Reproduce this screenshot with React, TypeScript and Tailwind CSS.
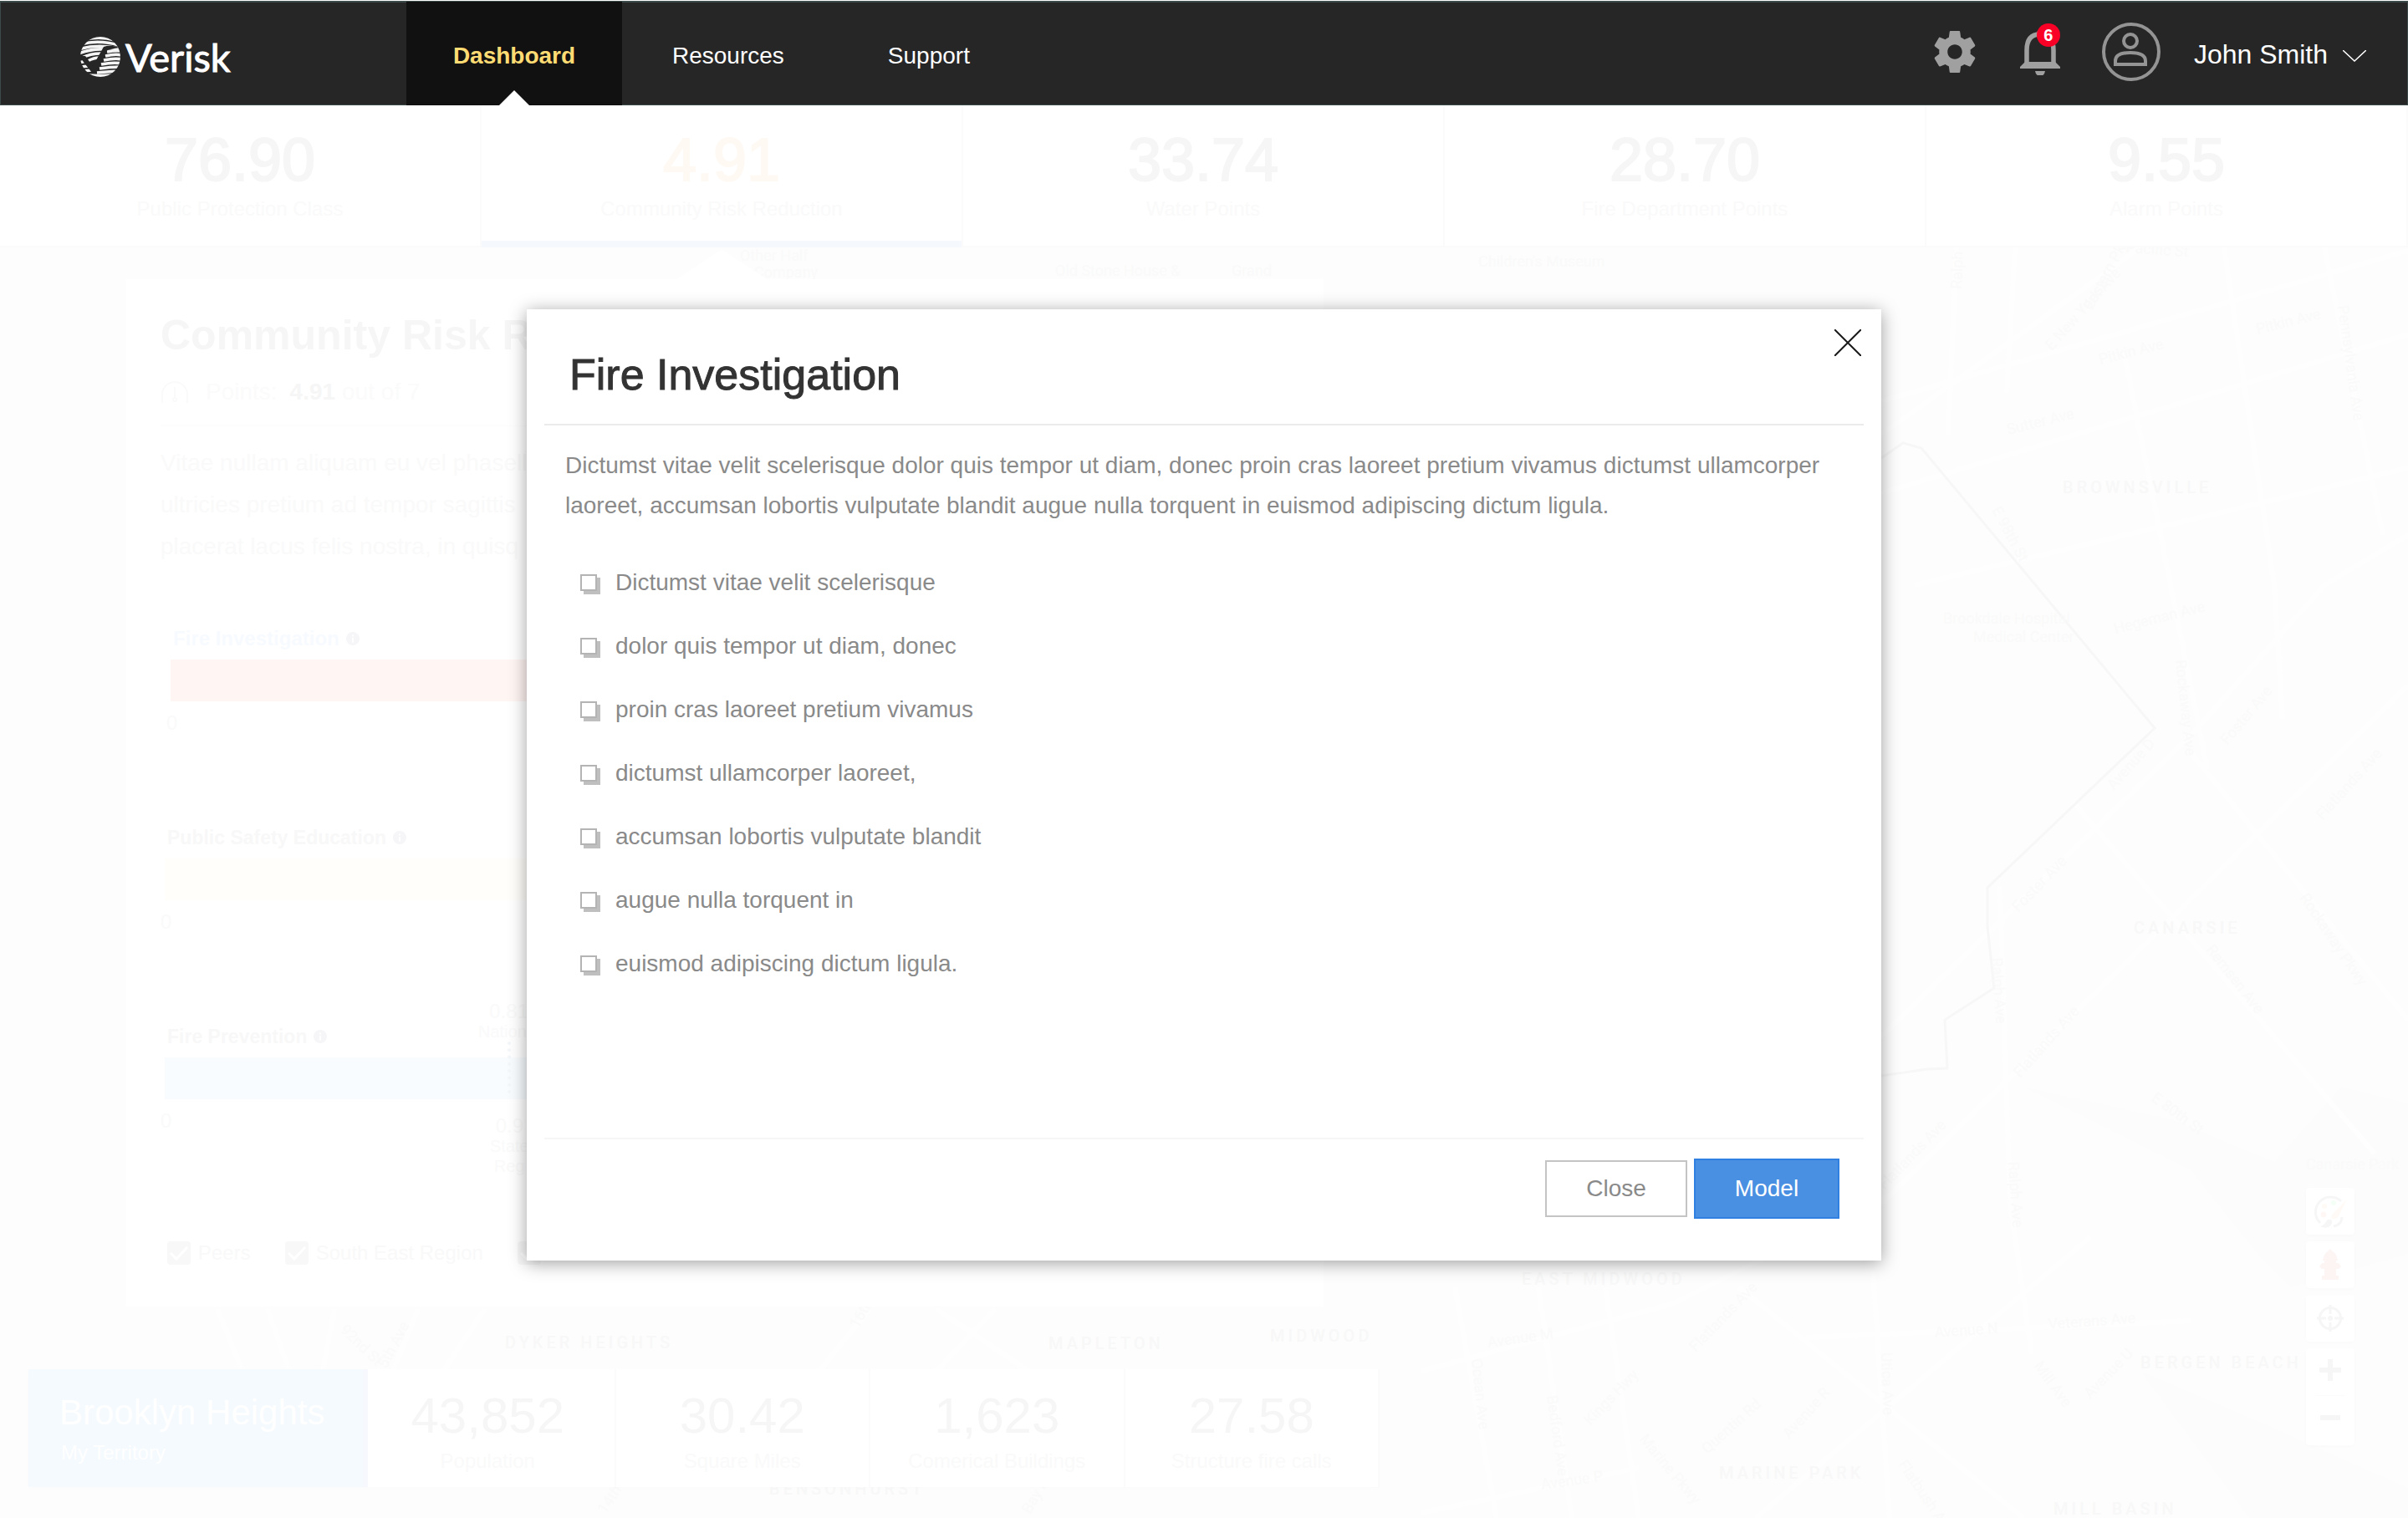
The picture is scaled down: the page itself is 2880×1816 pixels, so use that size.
import { useState, type ReactNode } from "react";

const sans = "font-['Liberation_Sans',Arial,sans-serif]";

type Stat = { value: string; label: string; active?: boolean };

const stats: Stat[] = [
  { value: "76.90", label: "Public Protection Class" },
  { value: "4.91", label: "Community Risk Reduction", active: true },
  { value: "33.74", label: "Water Points" },
  { value: "28.70", label: "Fire Department Points" },
  { value: "9.55", label: "Alarm Points" },
];

const territoryStats: Stat[] = [
  { value: "43,852", label: "Population" },
  { value: "30.42", label: "Square Miles" },
  { value: "1,623", label: "Comerical Buildings" },
  { value: "27.58", label: "Structure fire calls" },
];

const items = [
  "Dictumst vitae velit scelerisque",
  "dolor quis tempor ut diam, donec",
  "proin cras laoreet pretium vivamus",
  "dictumst ullamcorper laoreet,",
  "accumsan lobortis vulputate blandit",
  "augue nulla torquent in",
  "euismod adipiscing dictum ligula.",
];

const areas: [string, number, number][] = [
  ["BROWNSVILLE", 2467, 590],
  ["CANARSIE", 2552, 1117],
  ["BERGEN BEACH", 2560, 1637],
  ["MARINE PARK", 2056, 1769],
  ["MILL BASIN", 2456, 1812],
  ["EAST MIDWOOD", 1820, 1537],
  ["MIDWOOD", 1519, 1605],
  ["MAPLETON", 1254, 1614],
  ["DYKER HEIGHTS", 604, 1613],
  ["BENSONHURST", 920, 1788],
];

const streets: [string, number, number, number][] = [
  ["Pitkin Ave", 2700, 400, -14],
  ["Pitkin Ave", 2512, 436, -14],
  ["Sutter Ave", 2402, 520, -14],
  ["Eastern Pkwy", 2502, 372, -62],
  ["E New York Ave", 2454, 420, -48],
  ["Pennsylvania Ave", 2796, 366, 82],
  ["Pacific St", 2542, 302, 4],
  ["Ralph Ave", 2346, 346, -88],
  ["E 98th St", 2382, 610, 62],
  ["Hegeman Ave", 2530, 758, -14],
  ["Brookdale Hospital", 2324, 746, 0],
  ["Medical Center", 2360, 768, 0],
  ["Children's Museum", 1768, 319, 0],
  ["Other Half", 885, 312, 0],
  ["Company", 902, 332, 0],
  ["Old Stone House &", 1262, 330, 0],
  ["Grand", 1473, 330, 0],
  ["Rockaway Ave", 2602, 790, 84],
  ["Foster Ave", 2664, 892, -50],
  ["Avenue D", 2528, 946, -48],
  ["Flatlands Ave", 2778, 982, -48],
  ["Rockaway Pkwy", 2750, 1074, 56],
  ["Remsen Ave", 2638, 1136, 52],
  ["Foster Ave", 2414, 1092, -46],
  ["Ralph Ave", 2382, 1146, 86],
  ["Flatlands Ave", 2416, 1290, -48],
  ["E 80th St", 2572, 1316, 36],
  ["Canarsie Park", 2758, 1399, 0],
  ["Ralph Ave", 2402, 1390, 86],
  ["Flatlands Ave", 2254, 1424, -46],
  ["Flatlands Ave", 2028, 1618, -46],
  ["Avenue M", 1780, 1612, -8],
  ["Avenue N", 2314, 1600, -4],
  ["Veterans Ave", 2450, 1590, -4],
  ["Mill Ave", 2432, 1634, 54],
  ["Avenue U", 2500, 1674, -46],
  ["Utica Ave", 2250, 1618, 88],
  ["Ocean Ave", 1760, 1626, 84],
  ["Bedford Ave", 1850, 1670, 82],
  ["Kings Hwy", 1902, 1706, -46],
  ["Marine Pkwy", 1960, 1722, 50],
  ["Quentin Rd", 2042, 1740, -42],
  ["Avenue R", 2140, 1722, -48],
  ["Avenue P", 1844, 1782, -8],
  ["Flatbush Ave", 2270, 1752, 56],
  ["92nd St", 406, 1592, 44],
  ["5th Ave", 462, 1638, -62],
  ["14th Ave", 724, 1812, -56],
  ["16th Ave", 1026, 1590, -60],
  ["Bay Pkwy", 1232, 1812, -60],
];

const roads = [
  "M2250 480 L2880 300",
  "M2250 590 L2880 400",
  "M2250 520 L2560 296",
  "M2290 700 L2880 560",
  "M2340 296 L2330 520 M2410 296 L2400 470",
  "M2540 420 L2640 920 M2660 296 L2720 700 L2730 860",
  "M2780 296 L2850 640",
  "M2250 1240 L2620 880 L2780 700 L2880 640",
  "M2250 1440 L2880 820",
  "M2480 960 L2840 1380",
  "M2620 900 L2880 1220",
  "M2392 1060 L2404 1440 L2430 1620",
  "M2160 1600 L2620 1580",
  "M1700 1640 L2000 1560 L2260 1430",
  "M1740 1540 L1790 1816 M1840 1540 L1880 1816 M1920 1540 L1960 1816",
  "M2080 1540 L2420 1816",
  "M2240 1520 L2260 1816",
  "M1700 1810 L1960 1756",
  "M2100 1816 L2500 1480",
  "M260 1566 L290 1640 M320 1566 L346 1640 M400 1566 L386 1640 M500 1566 L470 1640 M580 1566 L530 1640",
  "M1040 1566 L980 1640 M1120 1566 L1230 1640 M1190 1566 L1120 1640",
];

function RiskMap() {
  return (
    <svg
      aria-hidden="true"
      className="absolute inset-0 h-full w-full"
      viewBox="0 0 2880 1816"
      preserveAspectRatio="xMinYMin slice"
    >
      <rect width="2880" height="1816" fill="#fdfdfd" />
      <path d="M2420 1300 L2620 1400 L2700 1500 L2740 1540 L2880 1500 L2880 1320 L2800 1300 L2720 1390 L2600 1340 Z" fill="#fcfcfc" />
      <path d="M2560 1640 L2690 1816 L2880 1816 L2880 1780 L2700 1700 Z" fill="#fcfcfc" />
      <g stroke="#fefefe" strokeWidth="6" fill="none">
        {roads.map((d) => (
          <path key={d} d={d} />
        ))}
      </g>
      <path
        d="M2250 548 L2276 530 L2298 536 L2577 871 L2377 1062 L2377 1108 L2385 1182 L2326 1220 L2329 1278 L2305 1279 L2250 1287"
        fill="none"
        stroke="#f7f7f7"
        strokeWidth="3"
      />
      <g fill="#f8f8f8" className="font-['Roboto',sans-serif] text-[20px] font-medium tracking-[4px]">
        {areas.map(([name, x, y]) => (
          <text key={name} x={x} y={y}>
            {name}
          </text>
        ))}
      </g>
      <g fill="#fafafa" className="font-['Roboto',sans-serif] text-[18px]">
        {streets.map(([name, x, y, turn]) => (
          <text key={`${name}-${x}-${y}`} transform={`translate(${x} ${y}) rotate(${turn})`}>
            {name}
          </text>
        ))}
      </g>
    </svg>
  );
}

function VeriskLogo() {
  return (
    <a href="#home" aria-label="Verisk home" className="flex items-center gap-[6px] text-white">
      <svg viewBox="0 0 48 48" className="h-12 w-12" aria-hidden="true">
        <defs>
          <clipPath id="globe">
            <circle cx="24" cy="24" r="24" />
          </clipPath>
        </defs>
        <g clipPath="url(#globe)">
          <g stroke="#f4f4f4" strokeWidth="3.6" fill="none">
            <path d="M6 3 Q24 -1 42 4" />
            <path d="M0 9 Q22 3 46 10" />
            <path d="M-2 15 Q20 8 46 14" />
            <path d="M-2 20 Q14 14 28 15" />
            <path d="M2 25 Q12 20 25 20" />
            <path d="M32 18 Q42 16 50 17" />
            <path d="M30 23 Q42 20 50 22" />
            <path d="M9 29 Q16 25 23 25" />
            <path d="M28 28 Q42 25 50 27" />
            <path d="M25 33 Q40 30 50 32" />
            <path d="M-2 31 L7 29" />
            <path d="M23 38 Q36 36 48 36" />
            <path d="M0 36 L10 35" />
            <path d="M3 41 L13 40" />
            <path d="M20 43 Q30 42 46 41" />
            <path d="M8 46 Q24 47 40 46" />
          </g>
          <path d="M0 23 L6 23 L15 35 L28 12 Q36 9 47 13 L33 15 L18 43 L14 43 L3 29 Z" fill="#262626" />
        </g>
      </svg>
      <span className="font-['Lato',sans-serif] text-[47px] leading-[52px] [-webkit-text-stroke:1px_#ffffff]">Verisk</span>
    </a>
  );
}

function NavLink({ children }: { children: ReactNode }) {
  return (
    <a href="#nav" className="flex items-center text-[28px] text-white">
      {children}
    </a>
  );
}

function Header() {
  return (
    <header className="mt-px flex h-[125px] items-stretch border border-t-2 border-[#3c4a4a] bg-[#262626]">
      <div className="flex w-[485px] items-center pt-[8px] pl-[95px]">
        <VeriskLogo />
      </div>
      <nav className="-mt-px -mb-px flex">
        <a
          href="#dashboard"
          aria-current="page"
          className="relative flex w-[258px] items-center justify-center bg-[#111111] pt-[6px] text-[28px] font-bold text-[#ffdc73]"
        >
          Dashboard
          <svg viewBox="0 0 36 18" className="absolute bottom-0 left-1/2 h-[18px] w-9 -translate-x-1/2" aria-hidden="true">
            <path d="M0 18 L18 0 L36 18 Z" fill="#ffffff" />
          </svg>
        </a>
        <div className="flex gap-[124px] pt-[6px] pl-[60px]">
          <NavLink>Resources</NavLink>
          <NavLink>Support</NavLink>
        </div>
      </nav>
      <div className="ml-auto flex items-center pr-[49px] pb-[4px]">
        <button type="button" aria-label="Settings" className="mr-[53px]">
          <svg viewBox="2 2 20 20" className="h-[50px] w-[50px]" fill="#a0a0a0" aria-hidden="true">
            <path d="M19.430 12.980c.04-.32.07-.64.07-.98s-.03-.66-.07-.98l2.110-1.650c.19-.15.24-.42.12-.64l-2-3.460c-.12-.22-.39-.3-.61-.22l-2.490 1c-.52-.4-1.080-.73-1.690-.98l-.38-2.650C14.460 2.180 14.250 2 14 2h-4c-.25 0-.46.18-.49.42l-.38 2.650c-.61.25-1.170.59-1.690.98l-2.490-1c-.23-.09-.49 0-.61.22l-2 3.460c-.13.22-.07.49.12.64l2.110 1.650c-.04.32-.07.65-.07.98s.03.66.07.98l-2.110 1.650c-.19.15-.24.42-.12.64l2 3.460c.12.22.39.3.61.22l2.490-1c.52.4 1.080.73 1.690.98l.38 2.650c.03.24.24.42.49.42h4c.25 0 .46-.18.49-.42l.38-2.650c.61-.25 1.170-.59 1.690-.98l2.490 1c.23.09.49 0 .61-.22l2-3.460c.12-.22.07-.49-.12-.64l-2.110-1.650zM12 15.500c-1.930 0-3.500-1.570-3.500-3.500s1.570-3.500 3.500-3.500 3.500 1.570 3.500 3.500-1.570 3.500-3.500 3.500z" />
          </svg>
        </button>
        <button type="button" aria-label="Notifications, 6 unread" className="relative mr-[50px]">
          <svg viewBox="0 0 48 56" className="h-14 w-12" aria-hidden="true">
            <path d="M8 43 V26 Q8 7 24 7 Q40 7 40 26 V43" fill="none" stroke="#a0a0a0" strokeWidth="5.500" />
            <path d="M20 6 Q20 2 24 2 Q28 2 28 6 Z" fill="#a0a0a0" />
            <path d="M6 40 H42 L48 46 V48 H0 V46 Z" fill="#a0a0a0" />
            <path d="M18 51 H30 Q29 57 24 57 Q19 57 18 51 Z" fill="#a0a0a0" />
          </svg>
          <span className="absolute top-[-6px] left-5 flex h-7 w-7 items-center justify-center rounded-full bg-[#f90027] text-[20px] leading-5 font-bold text-white">
            6
          </span>
        </button>
        <button type="button" className="flex items-center text-[32px] text-white">
          <svg viewBox="0 0 70 70" className="mr-[40px] h-[70px] w-[70px]" fill="none" stroke="#949494" strokeWidth="4" aria-hidden="true">
            <circle cx="35" cy="35" r="33" />
            <circle cx="34" cy="22" r="8" />
            <path d="M16 50 V46 Q16 36 34 36 Q52 36 52 46 V50 Z" />
          </svg>
          <span className="pt-[6px]">John Smith</span>
          <svg viewBox="0 0 28 14" className="mt-[10px] ml-[18px] h-[14px] w-7" fill="none" stroke="#ffffff" strokeWidth="1.500" aria-hidden="true">
            <path d="M0 0 L14 13 L28 0" />
          </svg>
        </button>
      </div>
    </header>
  );
}

function StatBar() {
  return (
    <section className="relative grid grid-cols-5 border-b-2 border-[#fbfbfb] bg-white">
      {stats.map((s) => (
        <div
          key={s.label}
          className="relative flex h-[168px] flex-col items-center border-r-2 border-[#fbfbfb] pt-[25px]"
        >
          <div
            className={
              s.active
                ? "text-[72px] leading-[80px] text-[#fff9f4] [-webkit-text-stroke:2px_#fff9f4]"
                : "text-[72px] leading-[80px] text-[#f6f6f6] [-webkit-text-stroke:2px_#f6f6f6]"
            }
          >
            {s.value}
          </div>
          <div className="mt-[3px] text-[24px] leading-8 text-[#fafafa]">{s.label}</div>
          {s.active && <div className="absolute inset-x-0 -bottom-[2px] h-2 bg-[#f5f9fe]" />}
        </div>
      ))}
    </section>
  );
}

function InfoIcon() {
  return (
    <svg viewBox="0 0 16 16" className="h-4 w-4" aria-hidden="true">
      <circle cx="8" cy="8" r="8" fill="#f6f6f8" />
      <path d="M7 3.500 H9 V5.500 H7 Z M7 7 H9 V12.500 H7 Z" fill="#ffffff" />
    </svg>
  );
}

function CategoryBar({ name, tone, title, inset }: { name: string; tone: string; title: string; inset?: boolean }) {
  return (
    <div className={inset ? "h-[238px] pl-[7px]" : "h-[238px]"}>
      <div className={`flex items-center gap-2 pl-2 leading-6 font-bold ${title}`}>
        {name}
        <InfoIcon />
      </div>
      <div className={`mt-[13px] ml-[5px] h-[50px] ${tone}`} />
      <div className="mt-3 text-[24px] leading-7 text-[#fafafa]">0</div>
    </div>
  );
}

function PeerToggle({ label }: { label: string }) {
  return (
    <label className="flex items-center gap-[9px] text-[24px] leading-7 text-[#f9f9f9]">
      <span className="relative flex h-7 w-7">
        <input type="checkbox" defaultChecked className="h-7 w-7 appearance-none rounded-sm bg-[#f8f8f8]" />
        <svg viewBox="0 0 28 28" className="pointer-events-none absolute inset-0" fill="none" stroke="#ffffff" strokeWidth="3" aria-hidden="true">
          <path d="M4 14 L11 21 L24 7" />
        </svg>
      </span>
      {label}
    </label>
  );
}

function RiskCard() {
  return (
    <section className="relative w-[1432px] bg-white pt-[37px] pr-[42px] pb-[50px] pl-[41px]">
      <svg viewBox="0 0 108 36" className="absolute -top-9 left-[658px] h-9 w-[108px]" aria-hidden="true">
        <path d="M0 36 L54 0 L108 36 Z" fill="#ffffff" />
      </svg>
      <h2 className="text-[50px] leading-[60px] font-bold text-[#f6f6f6]">Community Risk R</h2>
      <div className="mt-[22px] flex items-center text-[28px] leading-8 text-[#fbfbfb]">
        <svg viewBox="0 0 34 28" className="mr-[20px] h-7 w-[34px]" fill="none" stroke="#fafafa" strokeWidth="2" aria-hidden="true">
          <path d="M2 27 V17 A15 15 0 0 1 32 17 V27 M17 8 V22" />
          <circle cx="17" cy="23" r="2" />
        </svg>
        Points: <strong className="mr-[8px] ml-[15px] text-[#f6f6f6]">4.91</strong> out of 7
      </div>
      <p className="mt-[24px] border-t border-[#fcfcfc] pt-[19px] text-[28px] leading-[50px] text-[#fafafa]">
        Vitae nullam aliquam eu vel phasell
        <br />
        ultricies pretium ad tempor sagittis
        <br />
        placerat lacus felis nostra, in quisq
      </p>
      <div className="relative mt-[73px]">
        <CategoryBar name="Fire Investigation" title="text-[24px] text-[#f7fbff]" tone="bg-[#fff5f3]" inset />
        <CategoryBar name="Public Safety Education" title="text-[23px] text-[#f8f8f8]" tone="bg-[#fffefa]" />
        <CategoryBar name="Fire Prevention" title="text-[23px] text-[#f8f8f8]" tone="bg-[#f8fcff]" />
        <div className="absolute top-[446px] left-[380px] flex flex-col items-center text-[20px] leading-6 text-[#fafafa]">
          <span className="text-[24px]">0.81</span>
          National
          <span className="h-[62px] border-l-4 border-dotted border-[#f4f7fa]" />
        </div>
        <div className="absolute top-[583px] left-[394px] flex flex-col items-center text-[20px] leading-6 text-[#fafafa]">
          <span className="text-[24px]">0.9</span>
          State
          <span>Reg</span>
        </div>
      </div>
      <div className="mt-[19px] flex gap-[41px] pl-2">
        <PeerToggle label="Peers" />
        <PeerToggle label="South East Region" />
        <PeerToggle label="" />
      </div>
    </section>
  );
}

function TerritoryStrip() {
  return (
    <section className="flex h-[141px] w-[1616px] bg-white shadow-[0_2px_6px_rgba(0,0,0,0.01)]">
      <div className="flex w-[406px] flex-col border-r-[6px] border-[#f6f8fd] bg-[#f5fafe] pt-[28px] pl-[37px] text-white">
        <div className="text-[42px] leading-[48px]">Brooklyn Heights</div>
        <div className="mt-[8px] pl-[2px] text-[24px] leading-8">My Territory</div>
      </div>
      <div className="-ml-[8px] grid flex-1 grid-cols-4">
        {territoryStats.map((s) => (
          <div key={s.label} className="flex flex-col items-center border-r-2 border-[#fbfbfb] pt-[24px]">
            <div className="text-[60px] leading-[64px] text-[#f6f6f6]">{s.value}</div>
            <div className="mt-[6px] text-[24px] leading-8 text-[#fafafa]">{s.label}</div>
          </div>
        ))}
      </div>
    </section>
  );
}

function MapButton({ label, children }: { label: string; children: ReactNode }) {
  return (
    <button
      type="button"
      aria-label={label}
      className="flex h-14 w-[58px] items-center justify-center rounded bg-white shadow-[0_1px_4px_rgba(0,0,0,0.02)]"
    >
      {children}
    </button>
  );
}

function MapControls() {
  return (
    <div className="flex flex-col gap-2">
      <MapButton label="Map colours">
        <svg viewBox="0 0 40 40" className="h-10 w-10" fill="none" aria-hidden="true">
          <path d="M33 8 A18 18 0 1 0 8 34" stroke="#f6f6f6" strokeWidth="3" />
          <path d="M24 38 Q34 36 34 27" stroke="#f6f6f6" strokeWidth="3" />
          <circle cx="13" cy="14" r="3" fill="#fffaf5" />
          <circle cx="24" cy="10" r="3" fill="#f4fff6" />
          <circle cx="12" cy="24" r="3.500" fill="#fff7f5" />
          <path d="M40 6 L30 26 Q27 30 22 29 Q20 26 24 22 Z" fill="#fffaf6" />
          <path d="M8 38 Q13 37 15 32 Q18 28 22 31 Q23 36 18 39 Q13 41 8 38 Z" fill="#f6f6f6" />
        </svg>
      </MapButton>
      <MapButton label="Hydrants">
        <svg viewBox="0 0 26 38" className="h-[38px] w-[26px]" fill="#fcf5f4" aria-hidden="true">
          <path d="M13 0 L16 3 Q21 6 21 12 H22 V14 H20 V17 H23 L26 21 L23 24 H20 V32 H23 V37 H3 V32 H6 V24 H3 L0 21 L3 17 H6 V14 H4 V12 H5 Q5 6 10 3 Z" />
        </svg>
      </MapButton>
      <MapButton label="Centre map">
        <svg viewBox="0 0 32 32" className="h-8 w-8" fill="none" stroke="#f6f6f6" strokeWidth="3" aria-hidden="true">
          <circle cx="16" cy="16" r="12.500" />
          <circle cx="16" cy="16" r="1.500" />
          <path d="M16 0 V11 M16 21 V32 M0 16 H11 M21 16 H32" />
        </svg>
      </MapButton>
      <div className="flex w-[58px] flex-col rounded bg-white shadow-[0_1px_4px_rgba(0,0,0,0.02)]">
        <button type="button" aria-label="Zoom in" className="flex h-14 items-center justify-center pb-1">
          <svg viewBox="0 0 26 26" className="h-[26px] w-[26px]" fill="#f6f6f6" aria-hidden="true">
            <path d="M10 0 H16 V10 H26 V16 H16 V26 H10 V16 H0 V10 H10 Z" />
          </svg>
        </button>
        <div className="mx-3 border-t border-[#fbfbfb]" />
        <button type="button" aria-label="Zoom out" className="flex h-[59px] items-center justify-center pb-2">
          <svg viewBox="0 0 24 6" className="h-[6px] w-6" fill="#f6f6f6" aria-hidden="true">
            <path d="M0 0 H24 V6 H0 Z" />
          </svg>
        </button>
      </div>
    </div>
  );
}

function InvestigationDialog({ onClose }: { onClose: () => void }) {
  return (
    <div className="absolute inset-x-0 top-[370px] flex justify-center">
      <div
        role="dialog"
        aria-modal="true"
        aria-labelledby="dialog-title"
        className="relative w-[1620px] bg-white px-[21px] pb-[50px] shadow-[0_3px_20px_rgba(0,0,0,0.38)]"
      >
        <button type="button" aria-label="Dismiss" onClick={onClose} className="absolute top-6 right-6">
          <svg viewBox="0 0 32 32" className="h-8 w-8" fill="none" stroke="#1a1a1a" strokeWidth="2" aria-hidden="true">
            <path d="M0 0 L32 32 M32 0 L0 32" />
          </svg>
        </button>
        <h1
          id="dialog-title"
          className="border-b-2 border-[#ebebeb] pt-[48px] pb-[29px] pl-[30px] text-[52px] leading-[60px] text-[#333333] [-webkit-text-stroke:1px_#333333]"
        >
          Fire Investigation
        </h1>
        <p className="px-[25px] pt-[24px] text-[28px] leading-[48px] text-[#8a8a8a]">
          Dictumst vitae velit scelerisque dolor quis tempor ut diam, donec proin cras laoreet pretium vivamus dictumst
          ullamcorper laoreet, accumsan lobortis vulputate blandit augue nulla torquent in euismod adipiscing dictum
          ligula.
        </p>
        <ul className="flex flex-col gap-11 pt-[52px] pl-[43px]">
          {items.map((item) => (
            <li key={item}>
              <label className="flex w-fit items-center gap-[22px] text-[28px] leading-8 text-[#8a8a8a]">
                <input
                  type="checkbox"
                  className="h-5 w-5 appearance-none border-2 border-[#b4b4b4] bg-white shadow-[4px_4px_0_#bfbfbf] checked:bg-[#4a90e2]"
                />
                {item}
              </label>
            </li>
          ))}
        </ul>
        <div className="mt-[192px] flex items-center justify-end gap-2 border-t-2 border-[#f6f6f6] pt-[23px] pr-[29px] text-[28px]">
          <button type="button" onClick={onClose} className="h-[68px] w-[170px] border-2 border-[#c4c4c4] text-[#8a8a8a]">
            Close
          </button>
          <button type="button" className="h-[72px] w-[174px] border-2 border-[#2f80e0] bg-[#4a90e2] text-white">
            Model
          </button>
        </div>
      </div>
    </div>
  );
}

export default function App() {
  const [open, setOpen] = useState(true);
  return (
    <div className={`relative flow-root min-h-screen overflow-hidden bg-white ${sans}`}>
      <RiskMap />
      <div className="absolute inset-x-0 top-0 h-px bg-white" />
      <div className="relative">
        <Header />
        <StatBar />
        <main className="flex items-end justify-between pt-[38px] pr-[64px] pb-[36px] pl-[34px]">
          <div className="flex flex-col gap-[75px]">
            <div className="pl-[117px]">
              <RiskCard />
            </div>
            <TerritoryStrip />
          </div>
          <div className="pb-[50px]">
            <MapControls />
          </div>
        </main>
      </div>
      {open && <InvestigationDialog onClose={() => setOpen(false)} />}
    </div>
  );
}
